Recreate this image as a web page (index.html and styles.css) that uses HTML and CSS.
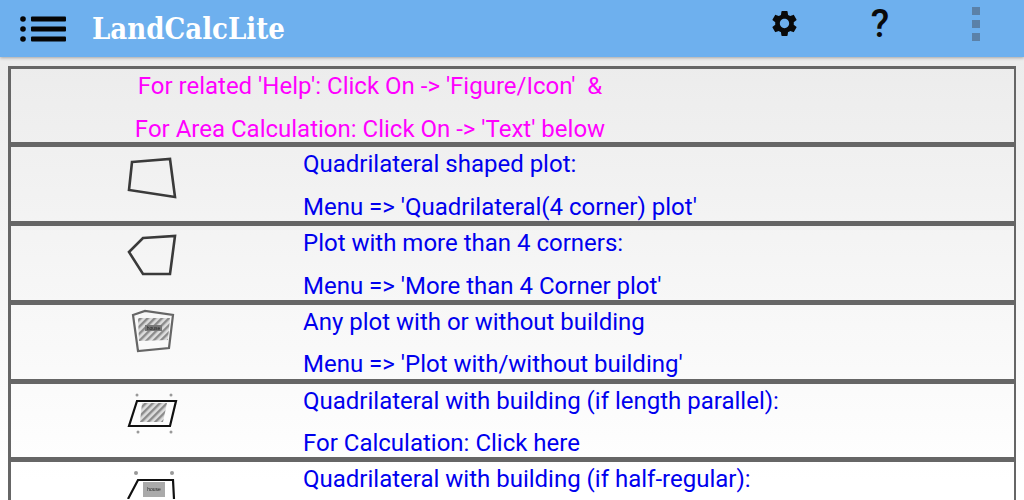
FILE: index.html
```html
<!DOCTYPE html>
<html lang="en">
<head>
  <meta charset="UTF-8" />
  <title>LandCalcLite</title>
  <link rel="stylesheet" href="styles.css">
</head>
<body>

  <!-- Action bar -->
  <div class="appbar">
    <svg class="menu-icon" viewBox="0 0 46 26" width="46" height="26">
      <circle cx="3" cy="3" r="2.8" />
      <circle cx="3" cy="13" r="2.8" />
      <circle cx="3" cy="23" r="2.8" />
      <rect x="11" y="0.5" width="35" height="5" rx="1" />
      <rect x="11" y="10.5" width="35" height="5" rx="1" />
      <rect x="11" y="20.5" width="35" height="5" rx="1" />
    </svg>
    <div class="app-title">LandCalcLite</div>
    <div class="actions">
      <div class="action">
        <svg viewBox="0 0 24 24" width="31" height="31">
          <path d="M19.14 12.94c.04-.3.06-.61.06-.94 0-.32-.02-.64-.07-.94l2.03-1.58c.18-.14.23-.41.12-.61l-1.92-3.32c-.12-.22-.37-.29-.59-.22l-2.39.96c-.5-.38-1.03-.7-1.62-.94l-.36-2.54c-.04-.24-.24-.41-.48-.41h-3.84c-.24 0-.43.17-.47.41l-.36 2.54c-.59.24-1.13.57-1.62.94l-2.39-.96c-.22-.08-.47 0-.59.22L2.74 8.87c-.12.21-.08.47.12.61l2.03 1.58c-.05.3-.09.63-.09.94s.02.64.07.94l-2.03 1.58c-.18.14-.23.41-.12.61l1.92 3.32c.12.22.37.29.59.22l2.39-.96c.5.38 1.03.7 1.62.94l.36 2.54c.05.24.24.41.48.41h3.84c.24 0 .44-.17.47-.41l.36-2.54c.59-.24 1.13-.56 1.62-.94l2.39.96c.22.08.47 0 .59-.22l1.92-3.32c.12-.22.07-.47-.12-.61l-2.01-1.58zM12 15.6c-1.98 0-3.6-1.62-3.6-3.6s1.62-3.6 3.6-3.6 3.6 1.62 3.6 3.6-1.62 3.6-3.6 3.6z" />
        </svg>
      </div>
      <div class="action help">?</div>
      <div class="action">
        <div class="kebab"><span></span><span></span><span></span></div>
      </div>
    </div>
  </div>

  <!-- Plot list -->
  <div class="plot-list">

    <div class="row intro">
      <div class="intro-text">
        <p>For related 'Help': Click On -&gt; 'Figure/Icon'&nbsp; &amp;</p>
        <p>For Area Calculation: Click On -&gt; 'Text' below</p>
      </div>
    </div>

    <div class="row">
      <div class="figure">
        <svg viewBox="0 0 60 50" width="60" height="50">
          <polygon class="plot" points="10,9 48,6 53,44 7,37" />
        </svg>
      </div>
      <div class="row-text">
        <p>Quadrilateral shaped plot:</p>
        <p>Menu =&gt; 'Quadrilateral(4 corner) plot'</p>
      </div>
    </div>

    <div class="row">
      <div class="figure">
        <svg viewBox="0 0 60 50" width="60" height="50">
          <polygon class="plot" points="21,6 53,4 48,42 21,42 7,20" />
        </svg>
      </div>
      <div class="row-text">
        <p>Plot with more than 4 corners:</p>
        <p>Menu =&gt; 'More than 4 Corner plot'</p>
      </div>
    </div>

    <div class="row">
      <div class="figure figure-tight">
        <svg viewBox="0 0 60 50" width="60" height="50">
          <defs>
            <pattern id="hatch" width="5" height="5" patternUnits="userSpaceOnUse" patternTransform="rotate(-45)">
              <rect width="5" height="5" fill="#ddd" />
              <rect width="5" height="2.4" fill="#8a8a8a" />
            </pattern>
          </defs>
          <polygon class="plot plot-thin plot-soft" points="11,8 23,4 51,8 47,41 16,44" />
          <polygon class="hatch" points="16,11 48,11 46,33 17,34" />
          <rect class="label" x="23" y="18" width="17" height="6" />
          <text class="tiny" x="31.5" y="23">house</text>
        </svg>
      </div>
      <div class="row-text">
        <p>Any plot with or without building</p>
        <p>Menu =&gt; 'Plot with/without building'</p>
      </div>
    </div>

    <div class="row">
      <div class="figure">
        <svg viewBox="0 0 60 50" width="60" height="50">
          <circle class="corner" cx="15" cy="5" r="1.5" />
          <circle class="corner" cx="49" cy="5" r="1.5" />
          <circle class="corner" cx="16" cy="42" r="1.5" />
          <circle class="corner" cx="49" cy="42" r="1.5" />
          <polygon class="plot plot-thin plot-dark" points="15,11 54,11 48,36 7,36" />
          <polygon class="hatch" points="20,13 45,13 41,32 18,32" />
        </svg>
      </div>
      <div class="row-text">
        <p>Quadrilateral with building (if length parallel):</p>
        <p>For Calculation: Click here</p>
      </div>
    </div>

    <div class="row">
      <div class="figure">
        <svg viewBox="0 0 60 31" width="60" height="31">
          <circle class="corner" cx="14" cy="5" r="2" />
          <circle class="corner" cx="50" cy="5" r="2" />
          <polyline class="plot plot-thin plot-dark" points="6,31 16,12 51,12 52,31" />
          <rect class="label label-light" x="21" y="14" width="22" height="15" />
          <text class="tiny" x="32" y="23">house</text>
        </svg>
      </div>
      <div class="row-text">
        <p>Quadrilateral with building (if half-regular):</p>
      </div>
    </div>

  </div>

</body>
</html>
```

FILE: styles.css
```css
body {
  font-family: "Roboto", sans-serif;
  background: linear-gradient(#ececec 60px, #fff 480px);
  margin: 0;
  min-height: 500px;
}

p {
  margin: 0;
}

.appbar {
  background: #6eb0ee;
  height: 57px;
  display: flex;
  align-items: center;
  box-shadow: 0 1px 3px rgba(0,0,0,0.3);
}

.menu-icon {
  margin-left: 20px;
  fill: #050505;
}

.app-title {
  margin-left: 26px;
  color: #fff;
  font-family: "DejaVu Serif Condensed", "DejaVu Serif", serif;
  font-weight: bold;
  font-size: 29px;
}

.actions {
  margin-left: auto;
  display: flex;
}

.action {
  width: 96px;
  height: 47px;
  margin-bottom: 10px;
  display: flex;
  align-items: center;
  justify-content: center;
  fill: #0a0a0a;
}

.help {
  font-size: 38px;
  font-weight: 500;
  color: #0a0a0a;
}

.kebab {
  display: flex;
  flex-direction: column;
  gap: 5px;
}

.kebab span {
  width: 8px;
  height: 8px;
  background: #5b81a8;
}

.plot-list {
  height: 431px;
  overflow: hidden;
  margin: 9px 8px 0;
  border: solid #666;
  border-width: 3px 2px 0 3px;
}

.row {
  height: 73.75px;
  display: flex;
  border-bottom: 5px solid #666;
}

.intro {
  height: 73.3px;
}

.intro-text {
  width: 480px;
  margin-left: 119px;
  margin-top: -4px;
  color: #ff00ff;
  font-size: 24px;
  line-height: 43px;
  text-align: center;
}

.figure {
  width: 282px;
  flex-shrink: 0;
  display: flex;
  justify-content: center;
  padding-top: 6px;
  filter: blur(0.6px);
}

.figure svg {
  display: block;
}

.figure-tight {
  padding-top: 2px;
}

.row-text {
  padding-left: 10px;
  color: #0000ee;
  font-size: 24px;
  line-height: 42.5px;
  margin-top: -4px;
}

.plot {
  fill: none;
  stroke: #3a3a3a;
  stroke-width: 2.6;
}

.plot-thin {
  stroke-width: 2.2;
}

.plot-soft {
  stroke: #666;
}

.plot-dark {
  stroke: #111;
}

.hatch {
  fill: url(#hatch);
}

.label {
  fill: #777;
}

.label-light {
  fill: #aaa;
}

.corner {
  fill: #999;
}

.tiny {
  font-family: "Liberation Sans", sans-serif;
  font-size: 5px;
  text-anchor: middle;
  fill: #222;
}
```
